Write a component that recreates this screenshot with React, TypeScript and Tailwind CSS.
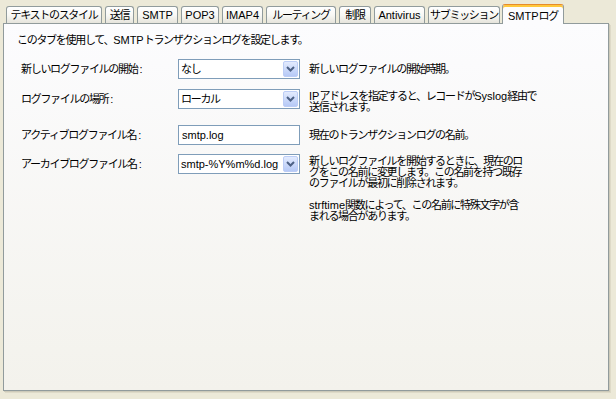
import React from "react";

function L({ children }: { children: React.ReactNode }) {
  return <span className="tracking-normal">{children}</span>;
}

const tabs: { label: React.ReactNode; w: number; k: string }[] = [
  { k: "1", label: "テキストのスタイル", w: 96 },
  { k: "2", label: "送信", w: 29 },
  { k: "3", label: <L>SMTP</L>, w: 41 },
  { k: "4", label: <L>POP3</L>, w: 38 },
  { k: "5", label: <L>IMAP4</L>, w: 41 },
  { k: "6", label: "ルーティング", w: 70 },
  { k: "7", label: "制限", w: 32 },
  { k: "8", label: <L>Antivirus</L>, w: 51 },
  { k: "9", label: "サブミッション", w: 72 },
];

function Chevron() {
  return (
    <svg width="9" height="6" viewBox="0 0 9 6">
      <path d="M1 1 L4.5 4.5 L8 1" fill="none" stroke="#4d6185" strokeWidth="2" />
    </svg>
  );
}

function Select({ value }: { value: React.ReactNode }) {
  return (
    <div className="w-[122px] h-[20px] border border-[#7f9db9] bg-white flex items-center justify-between pl-[2px] pr-[1px]">
      <span className="whitespace-nowrap leading-[12px]">{value}</span>
      <div className="w-[15px] h-[16px] rounded-[2px] border border-[#bccdf6] bg-gradient-to-b from-[#e3ebfe] to-[#b6c9f6] flex items-center justify-center">
        <Chevron />
      </div>
    </div>
  );
}

function Row({
  label,
  control,
  desc,
  center,
}: {
  label: string;
  control: React.ReactNode;
  desc: React.ReactNode;
  center?: boolean;
}) {
  return (
    <div className="flex items-start">
      <div className="w-[158px] h-[20px] flex items-center pl-[1px] whitespace-nowrap">
        {label}
        <span className="tracking-normal ml-[2px]">:</span>
      </div>
      {control}
      <div
        className={
          center
            ? "ml-[9px] w-[215px] h-[20px] flex items-center whitespace-nowrap"
            : "ml-[9px] w-[215px] mt-[2px] leading-[11px] whitespace-nowrap"
        }
      >
        {desc}
      </div>
    </div>
  );
}

export default function App() {
  return (
    <div className="w-[616px] h-[399px] bg-[#ece9d8] overflow-hidden text-[11px] text-black tracking-[-1.3px] font-['Liberation_Sans','Noto_Sans_CJK_JP',sans-serif]">
      <div className="flex items-end h-[23px] pl-[6px] gap-[3px]">
        {tabs.map((t) => (
          <div
            key={t.k}
            style={{ width: t.w }}
            className="h-[17px] border border-b-0 border-[#919b9c] rounded-t-[3px] bg-gradient-to-b from-white via-[#f8f8f5] to-[#e6e4dc] flex items-center justify-center whitespace-nowrap leading-[12px]"
          >
            {t.label}
          </div>
        ))}
        <div className="relative z-10 -mb-[1px] -ml-[1px] w-[62px] h-[20px] border-x border-t border-[#919b9c] border-t-[#e68b2c] rounded-t-[3px] bg-[#fcfcfe] shadow-[inset_0_2px_0_#ffc83c] flex items-center justify-center whitespace-nowrap pt-[2px] leading-[12px]">
          <L>SMTP</L>ログ
        </div>
      </div>
      <div className="ml-[3px] w-[606px] h-[368px] border border-[#919b9c] bg-gradient-to-b from-[#fcfcfe] to-[#f3f2ec] shadow-[1px_1px_0_#cdcab9,2px_2px_0_#dedac8] pt-[10px] pl-[13px]">
        <div className="leading-[12px] whitespace-nowrap">
          このタブを使用して、<L>SMTP</L>トランザクションログを設定します。
        </div>
        <div className="pl-[3px] mt-[13px] flex flex-col">
          <Row
            label="新しいログファイルの開始"
            control={<Select value="なし" />}
            desc="新しいログファイルの開始時期。"
            center
          />
          <div className="h-[10px]" />
          <Row
            label="ログファイルの場所"
            control={<Select value="ローカル" />}
            desc={
              <>
                <L>IP</L>アドレスを指定すると、レコードが<L>Syslog</L>経由で
                <br />
                送信されます。
              </>
            }
          />
          <div className="h-[12px]" />
          <Row
            label="アクティブログファイル名"
            control={
              <div className="w-[122px] h-[20px] border border-[#7f9db9] bg-white flex items-center pl-[3px] whitespace-nowrap leading-[12px]">
                <L>smtp.log</L>
              </div>
            }
            desc="現在のトランザクションログの名前。"
            center
          />
          <div className="h-[9px]" />
          <Row
            label="アーカイブログファイル名"
            control={<Select value={<L>smtp-%Y%m%d.log</L>} />}
            desc={
              <>
                新しいログファイルを開始するときに、現在のロ
                <br />
                グをこの名前に変更します。この名前を持つ既存
                <br />
                のファイルが最初に削除されます。
                <br />
                <br />
                <L>strftime</L>関数によって、この名前に特殊文字が含
                <br />
                まれる場合があります。
              </>
            }
          />
        </div>
      </div>
    </div>
  );
}
